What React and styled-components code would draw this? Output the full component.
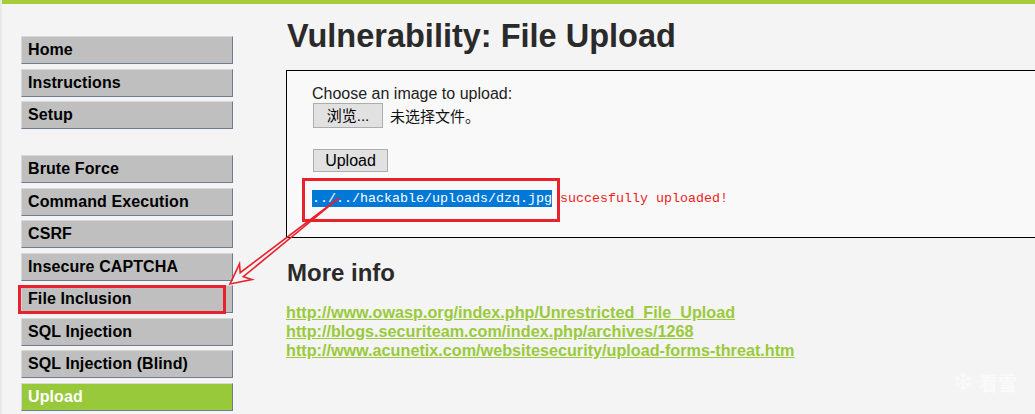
import React from "react";
import styled, { createGlobalStyle } from "styled-components";

const GlobalStyle = createGlobalStyle`
  html, body {
    margin: 0;
    padding: 0;
    background: #f4f4f4;
    overflow: hidden;
  }
  body {
    font-family: "Liberation Sans", Arial, sans-serif;
    color: #000;
  }
`;

const Page = styled.div`
  position: relative;
  width: 1035px;
  height: 414px;
  box-sizing: border-box;
  border-left: 2px solid #e9e9e9;
  overflow: hidden;
`;

const TopBar = styled.div`
  height: 4px;
  background: #a3cd39;
`;

const Body = styled.div`
  display: flex;
  align-items: flex-start;
`;

const Sidebar = styled.nav`
  width: 212px;
  flex: none;
  margin-left: 19px;
  padding-top: 32px;
  display: flex;
  flex-direction: column;
  gap: 26px;
`;

const MenuGroup = styled.ul`
  list-style: none;
  margin: 0;
  padding: 0;
  display: flex;
  flex-direction: column;
  gap: 4.5px;
`;

const MenuItem = styled.li`
  position: relative;
  height: 26px;
  line-height: 26px;
  padding-left: 6px;
  border: 1px solid;
  border-color: #d8d8d8 #6f7b92 #6f7b92 #d8d8d8;
  background: ${(p) => (p.$active ? "#97c93a" : "#bfbfbf")};
  color: ${(p) => (p.$active ? "#ffffff" : "#000000")};
  font-size: 16px;
  font-weight: bold;
  letter-spacing: 0.1px;
  white-space: nowrap;
`;

const MarkBox = styled.span`
  position: absolute;
  box-sizing: border-box;
  border: 3px solid #e8212b;
  pointer-events: none;
`;

const ItemMark = styled(MarkBox)`
  left: -4px;
  top: -1px;
  width: 208px;
  height: 29px;
`;

const Main = styled.main`
  margin-left: 53px;
  width: 760px;
  flex: none;
  padding-top: 14px;
`;

const Title = styled.h1`
  margin: 0 0 15px 1px;
  font-size: 32.5px;
  line-height: 37px;
  font-weight: bold;
  color: #2a2a2a;
`;

const UploadBox = styled.div`
  border: 1px solid #000;
  background: #f8f9f8;
  padding: 14px 0 30px 25px;
`;

const Label = styled.div`
  font-size: 16px;
  line-height: 18px;
  color: #222;
`;

const FileRow = styled.div`
  display: flex;
  align-items: center;
  gap: 7px;
  height: 25px;
`;

const Button = styled.button`
  box-sizing: border-box;
  height: ${(p) => p.$h}px;
  width: ${(p) => p.$w}px;
  margin: 0 0 0 1px;
  padding: 0;
  border: 1px solid #adadad;
  background: #e1e1e1;
  color: #000;
  font-family: "Liberation Sans", "Noto Sans CJK SC", sans-serif;
  font-size: ${(p) => p.$fs}px;
  line-height: 1;
`;

const NoFile = styled.span`
  font-family: "Noto Sans CJK SC", sans-serif;
  font-size: 15px;
  color: #111;
`;

const SubmitRow = styled.div`
  margin-top: 21px;
  height: 23px;
`;

const Result = styled.div`
  margin-top: 18px;
  font-family: "Liberation Mono", "Courier New", monospace;
  font-size: 13.33px;
  line-height: 17px;
  height: 17px;
  white-space: pre;
`;

const PathWrap = styled.span`
  position: relative;
  display: inline-block;
  vertical-align: top;
`;

const Selected = styled.span`
  display: inline-block;
  background: #0078d7;
  color: #fff;
  line-height: 17px;
`;

const PathMark = styled(MarkBox)`
  left: -10.5px;
  top: -12px;
  width: 258px;
  height: 44px;
`;

const Success = styled.span`
  color: #f01c1c;
`;

const SubTitle = styled.h2`
  margin: 20.5px 0 16.5px 1px;
  font-size: 24px;
  line-height: 28px;
  font-weight: bold;
  color: #2a2a2a;
`;

const Links = styled.ul`
  list-style: none;
  margin: 0;
  padding: 0;
`;

const LinkItem = styled.li`
  font-size: 16.2px;
  line-height: 19px;
  font-weight: bold;
`;

const Link = styled.a`
  color: #9aca3c;
  text-decoration: underline;
`;

const Overlay = styled.svg`
  position: absolute;
  left: 0;
  top: 0;
  pointer-events: none;
`;

const Watermark = styled.div`
  position: absolute;
  right: 18px;
  bottom: 17px;
  display: flex;
  align-items: center;
  gap: 5px;
  color: rgba(255, 255, 255, 0.6);
  font-family: "Noto Sans CJK SC", sans-serif;
  font-size: 19px;
  font-weight: bold;
`;

const Flake = styled.span`
  font-family: "DejaVu Sans", sans-serif;
  font-size: 26px;
`;

const firstGroup = ["Home", "Instructions", "Setup"];
const secondGroup = [
  "Brute Force",
  "Command Execution",
  "CSRF",
  "Insecure CAPTCHA",
  "File Inclusion",
  "SQL Injection",
  "SQL Injection (Blind)",
  "Upload",
];

const links = [
  "http://www.owasp.org/index.php/Unrestricted_File_Upload",
  "http://blogs.securiteam.com/index.php/archives/1268",
  "http://www.acunetix.com/websitesecurity/upload-forms-threat.htm",
];

export default function App() {
  return (
    <>
      <GlobalStyle />
      <Page>
        <TopBar />
        <Body>
          <Sidebar>
            <MenuGroup>
              {firstGroup.map((t) => (
                <MenuItem key={t}>{t}</MenuItem>
              ))}
            </MenuGroup>
            <MenuGroup>
              {secondGroup.map((t) => (
                <MenuItem key={t} $active={t === "Upload"}>
                  {t}
                  {t === "File Inclusion" && <ItemMark />}
                </MenuItem>
              ))}
            </MenuGroup>
          </Sidebar>
          <Main>
            <Title>Vulnerability: File Upload</Title>
            <UploadBox>
              <Label>Choose an image to upload:</Label>
              <FileRow>
                <Button $w={70} $h={25} $fs={15}>浏览...</Button>
                <NoFile>未选择文件。</NoFile>
              </FileRow>
              <SubmitRow>
                <Button $w={75} $h={23} $fs={16}>Upload</Button>
              </SubmitRow>
              <Result>
                <PathWrap>
                  <Selected>../../hackable/uploads/dzq.jpg</Selected>
                  <PathMark />
                </PathWrap>
                {" "}
                <Success>succesfully uploaded!</Success>
              </Result>
            </UploadBox>
            <SubTitle>More info</SubTitle>
            <Links>
              {links.map((l) => (
                <LinkItem key={l}>
                  <Link href={l}>{l}</Link>
                </LinkItem>
              ))}
            </Links>
          </Main>
        </Body>
        <Overlay width="1035" height="414" viewBox="0 0 1035 414">
          <path
            d="M337 198 L241.3 276.7 L249.9 279.5 L228 284 L237.5 263.8 L238.2 272.7 Z"
            fill="none"
            stroke="#e8212b"
            strokeWidth="1.6"
            strokeLinejoin="miter"
          />
        </Overlay>
        <Watermark>
          <Flake>❄</Flake>
          <span>看雪</span>
        </Watermark>
      </Page>
    </>
  );
}
